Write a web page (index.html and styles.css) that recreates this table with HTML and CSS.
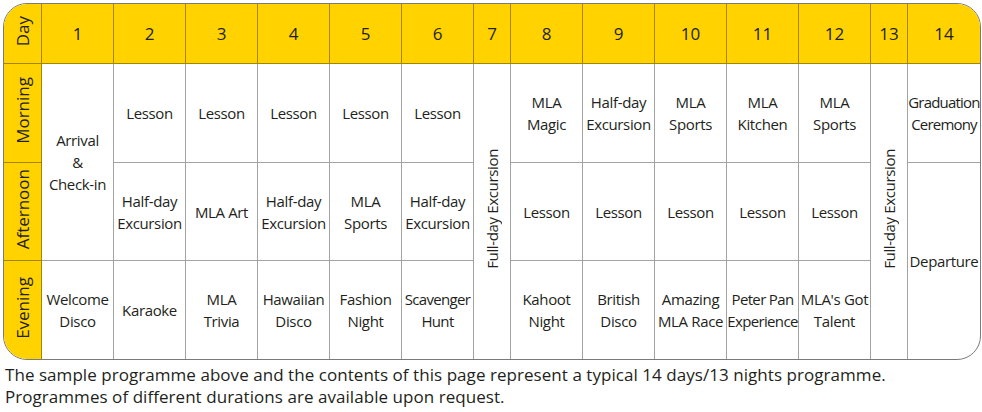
FILE: index.html
```html
<!DOCTYPE html>
<html>
<head>
<meta charset="utf-8">
<link rel="stylesheet" href="styles.css">
</head>
<body>
<div class="frame">
<table class="prog">
<colgroup>
<col class="c-lab"><col class="c-day"><col class="c-day"><col class="c-day"><col class="c-day"><col class="c-day"><col class="c-day"><col class="c-nar"><col class="c-day"><col class="c-day"><col class="c-day"><col class="c-day"><col class="c-day"><col class="c-nar"><col class="c-last">
</colgroup>
<tr class="r-head">
<th class="lab"><span class="vt">Day</span></th>
<th>1</th><th>2</th><th>3</th><th>4</th><th>5</th><th>6</th><th>7</th><th>8</th><th>9</th><th>10</th><th>11</th><th>12</th><th>13</th><th class="last">14</th>
</tr>
<tr class="r-morn">
<th class="lab"><span class="vt">Morning</span></th>
<td rowspan="2">Arrival<br>&amp;<br>Check-in</td>
<td>Lesson</td><td>Lesson</td><td>Lesson</td><td>Lesson</td><td>Lesson</td>
<td rowspan="3" class="full bot"><span class="vt">Full-day Excursion</span></td>
<td>MLA<br>Magic</td><td>Half-day<br>Excursion</td><td>MLA<br>Sports</td><td>MLA<br>Kitchen</td><td>MLA<br>Sports</td>
<td rowspan="3" class="full bot"><span class="vt">Full-day Excursion</span></td>
<td class="last tighter">Graduation<br>Ceremony</td>
</tr>
<tr class="r-aft">
<th class="lab"><span class="vt">Afternoon</span></th>
<td>Half-day<br>Excursion</td><td>MLA Art</td><td>Half-day<br>Excursion</td><td>MLA<br>Sports</td><td>Half-day<br>Excursion</td>
<td>Lesson</td><td>Lesson</td><td>Lesson</td><td>Lesson</td><td>Lesson</td>
<td rowspan="2" class="last bot">Departure</td>
</tr>
<tr class="r-eve">
<th class="lab bot"><span class="vt">Evening</span></th>
<td class="bot">Welcome<br>Disco</td><td class="bot">Karaoke</td><td class="bot">MLA<br>Trivia</td><td class="bot">Hawaiian<br>Disco</td><td class="bot">Fashion<br>Night</td><td class="bot tight">Scavenger<br>Hunt</td>
<td class="bot">Kahoot<br>Night</td><td class="bot">British<br>Disco</td><td class="bot">Amazing<br>MLA Race</td><td class="bot tight">Peter Pan<br>Experience</td><td class="bot">MLA's Got<br>Talent</td>
</tr>
</table>
</div>
<p class="note">The sample programme above and the contents of this page represent a typical 14 days/13 nights programme.<br>Programmes of different durations are available upon request.</p>
</body>
</html>
```
FILE: styles.css
```css
html, body {
  margin: 0;
  padding: 0;
  background: #ffffff;
}
body {
  padding: 3px 0 0 3px;
  font-family: "Open Sans", "Liberation Sans", sans-serif;
  color: #231f20;
}
.frame {
  width: 976px;
  border: 1px solid #7a7a7a;
  border-radius: 24px;
  overflow: hidden;
}
.prog {
  border-collapse: separate;
  border-spacing: 0;
  table-layout: fixed;
  width: 976px;
}
.c-lab { width: 38px; }
.c-day { width: 72px; }
.c-nar { width: 37px; }
.c-last { width: 72px; }
.prog th, .prog td {
  padding: 0;
  text-align: center;
  vertical-align: middle;
  border-right: 1px solid rgba(0, 0, 0, 0.36);
  border-bottom: 1px solid rgba(0, 0, 0, 0.36);
  font-weight: 400;
  font-size: 15px;
  line-height: 22px;
  letter-spacing: -0.35px;
  white-space: nowrap;
}
.prog td.tight {
  letter-spacing: -0.65px;
}
.prog td.tighter {
  letter-spacing: -0.8px;
}
.prog th {
  background: #ffd200;
}
.prog .last { border-right: none; }
.prog .bot { border-bottom: none; }
.r-head th {
  height: 59px;
  font-size: 17px;
  letter-spacing: 0;
}
.r-morn > * { height: 98px; }
.r-aft > * { height: 97px; }
.r-eve > * { height: 98px; }
.prog th.lab {
  font-size: 17px;
  letter-spacing: 0;
}
.vt {
  display: inline-block;
  writing-mode: vertical-rl;
  transform: rotate(180deg);
  white-space: nowrap;
}
.note {
  margin: 4px 0 0 2px;
  font-size: 17px;
  line-height: 22px;
  letter-spacing: 0.05px;
}
```
